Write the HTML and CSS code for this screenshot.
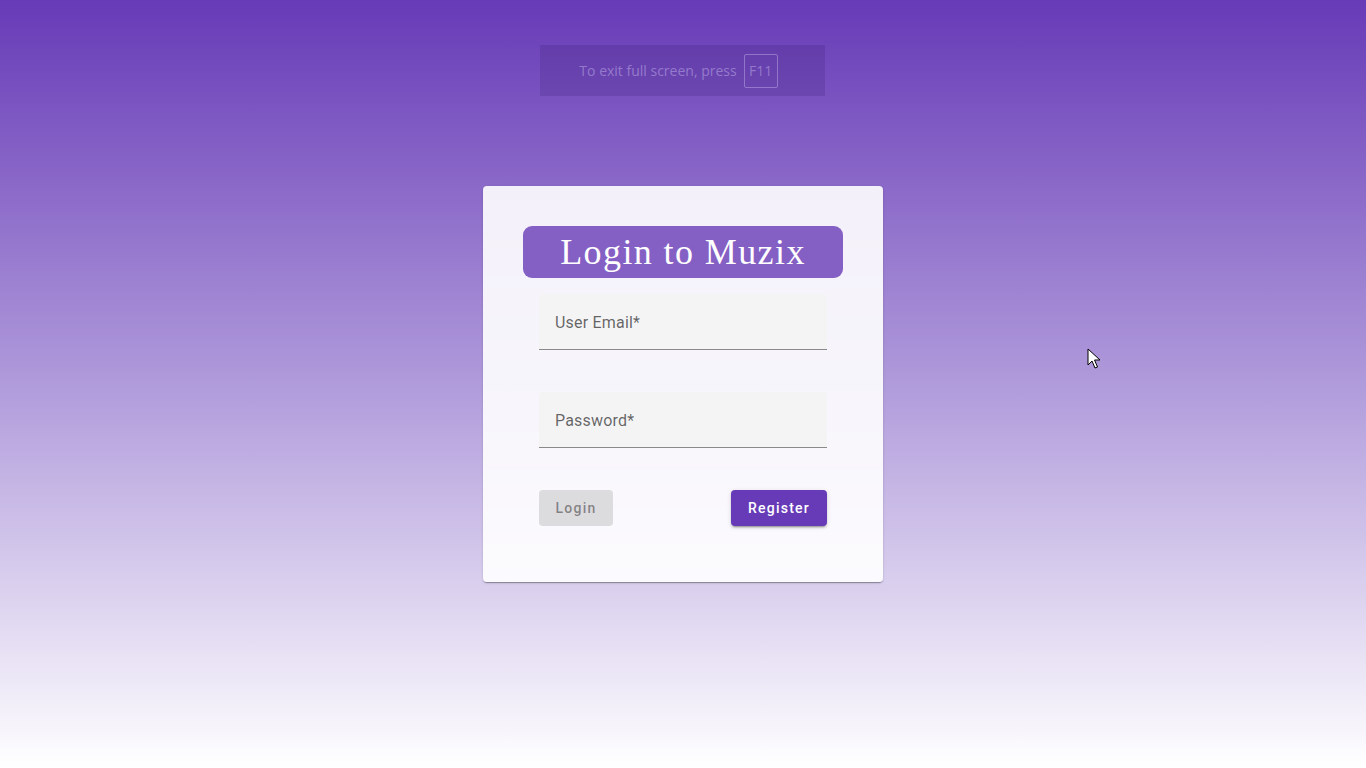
FILE: index.html
```html
<!DOCTYPE html>
<html lang="en">
<head>
<meta charset="utf-8">
<title>Muzix Login</title>
<link rel="stylesheet" href="styles.css">
</head>
<body>
<div class="fs-notice">
  <span class="fs-text">To exit full screen, press</span>
  <span class="fs-key">F11</span>
</div>
<main class="page">
  <form class="card">
    <h1 class="title">Login to Muzix</h1>
    <div class="field">
      <label class="field-label">User Email*</label>
    </div>
    <div class="field field-second">
      <label class="field-label">Password*</label>
    </div>
    <div class="actions">
      <button type="button" class="btn btn-disabled">Login</button>
      <button type="button" class="btn btn-primary">Register</button>
    </div>
  </form>
</main>
<svg class="cursor" width="14" height="22" viewBox="0 0 14 22" xmlns="http://www.w3.org/2000/svg">
  <path d="M1 1 L1 17 L5 13 L8 20 L10.5 19 L7.5 12 L13 12 Z" fill="#fff" stroke="#000" stroke-width="1" stroke-linejoin="round"/>
</svg>
</body>
</html>
```
FILE: styles.css
```css
html, body {
  margin: 0;
  padding: 0;
  height: 100%;
}
body {
  min-height: 768px;
  background: linear-gradient(to bottom, #673ab7 0%, #b09bdb 50%, #ffffff 100%);
  font-family: Roboto, "Liberation Sans", sans-serif;
  overflow: hidden;
}
.page {
  display: flex;
  justify-content: center;
  padding-top: 186px;
}
.card {
  width: 400px;
  box-sizing: border-box;
  padding: 40px 40px 56px;
  background: rgba(255, 255, 255, 0.9);
  border-radius: 4px;
  box-shadow: 0 2px 1px -1px rgba(0,0,0,.2), 0 1px 1px 0 rgba(0,0,0,.14), 0 1px 3px 0 rgba(0,0,0,.12);
  display: flex;
  flex-direction: column;
}
.title {
  margin: 0;
  height: 52px;
  background: #8560c4;
  border-radius: 9px;
  color: #fff;
  font-family: "Liberation Serif", "Times New Roman", serif;
  font-weight: normal;
  font-size: 36px;
  letter-spacing: 1.4px;
  line-height: 52px;
  text-align: center;
}
.field {
  margin: 16px 16px 0;
  height: 56px;
  box-sizing: border-box;
  background: #f4f4f5;
  border-bottom: 1px solid #8a8a8a;
  border-radius: 4px 4px 0 0;
  padding: 0 16px;
  display: flex;
  align-items: center;
}
.field-second {
  margin-top: 42px;
}
.field-label {
  font-size: 16px;
  color: rgba(0,0,0,.6);
  letter-spacing: 0.2px;
  padding-top: 2px;
}
.actions {
  margin: 42px 16px 0;
  display: flex;
  justify-content: space-between;
}
.btn {
  height: 36px;
  border: none;
  border-radius: 4px;
  font-family: Roboto, "Liberation Sans", sans-serif;
  font-size: 14px;
  font-weight: 500;
  letter-spacing: 1.25px;
  padding: 0 16px;
}
.btn-disabled {
  width: 74px;
  background: #dcdbde;
  color: rgba(0,0,0,.42);
}
.btn-primary {
  width: 96px;
  background: #673ab7;
  color: #fff;
  box-shadow: 0 3px 1px -2px rgba(0,0,0,.2), 0 2px 2px 0 rgba(0,0,0,.14), 0 1px 5px 0 rgba(0,0,0,.12);
}
.fs-notice {
  position: absolute;
  left: 540px;
  top: 45px;
  width: 285px;
  height: 51px;
  box-sizing: border-box;
  padding-right: 8px;
  background: rgba(60, 30, 120, 0.22);
  display: flex;
  align-items: center;
  justify-content: center;
  gap: 7px;
  font-family: "Open Sans", "DejaVu Sans", sans-serif;
  font-size: 14px;
  color: rgba(190, 170, 230, 0.55);
}
.fs-key {
  display: inline-flex;
  align-items: center;
  justify-content: center;
  width: 34px;
  height: 34px;
  box-sizing: border-box;
  border: 1px solid rgba(190, 170, 230, 0.5);
  border-radius: 2px;
}
.cursor {
  position: absolute;
  left: 1087px;
  top: 348px;
}
```
